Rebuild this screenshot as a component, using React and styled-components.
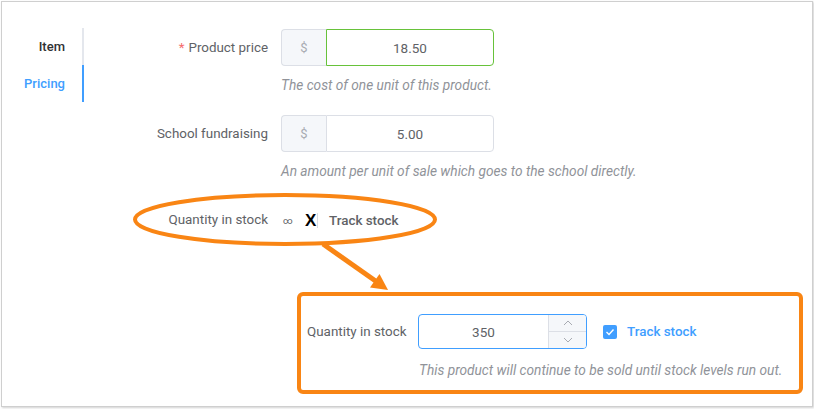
import React from "react";
import styled, { createGlobalStyle } from "styled-components";

const Global = createGlobalStyle`
  html, body { margin: 0; padding: 0; background: #fff; }
  body { font-family: Roboto, "Liberation Sans", Arial, sans-serif; -webkit-font-smoothing: antialiased; }
  * { box-sizing: border-box; }
`;

const Page = styled.div`
  position: relative;
  width: 814px;
  height: 409px;
  overflow: hidden;
`;

const Frame = styled.div`
  position: absolute;
  left: 1px;
  top: 1px;
  width: 812px;
  height: 406px;
  border: 1px solid #cfcfcf;
  box-shadow: 1px 1px 2px rgba(0, 0, 0, 0.18);
  display: flex;
  background: #fff;
`;

const Tabs = styled.div`
  width: 82px;
  padding-top: 26px;
  display: flex;
  flex-direction: column;
  flex-shrink: 0;
`;

const Tab = styled.div`
  height: 37px;
  line-height: 37px;
  text-align: right;
  padding-right: 17px;
  font-size: 13px;
  font-weight: 500;
  color: ${(p) => (p.$active ? "#409eff" : "#303133")};
  border-right: 2px solid ${(p) => (p.$active ? "#409eff" : "#e4e7ed")};
`;

const Form = styled.div`
  flex: 1;
  padding-top: 27px;
  display: flex;
  flex-direction: column;
`;

const Item = styled.div`
  display: flex;
  align-items: flex-start;
  flex-shrink: 0;
  margin-bottom: ${(p) => p.$mb || 0}px;
`;

const Label = styled.div`
  width: 197px;
  padding-right: 13px;
  text-align: right;
  font-size: 13.4px;
  color: #606266;
  line-height: ${(p) => p.$lh || 37}px;
  white-space: nowrap;
`;

const Star = styled.span`
  color: #f56c6c;
  margin-right: 4px;
`;

const Content = styled.div`
  display: flex;
  flex-direction: column;
`;

const Group = styled.div`
  display: flex;
  width: 213px;
  height: 37px;
`;

const Addon = styled.div`
  width: 45px;
  background: #f5f7fa;
  border: 1px solid #dcdfe6;
  border-right: none;
  border-radius: 4px 0 0 4px;
  color: #a8abb2;
  font-size: 13px;
  display: flex;
  align-items: center;
  justify-content: center;
`;

const Field = styled.div`
  flex: 1;
  border: 1px solid ${(p) => (p.$ok ? "#67c23a" : "#dcdfe6")};
  border-radius: 0 4px 4px 0;
  font-size: 13.5px;
  color: #606266;
  display: flex;
  align-items: center;
  justify-content: center;
`;

const Help = styled.div`
  margin-top: ${(p) => p.$mt || 10}px;
  font-size: 13.7px;
  line-height: 18px;
  font-style: italic;
  color: #909399;
  white-space: nowrap;
  margin-left: ${(p) => p.$ml || 0}px;
`;

const StockRow = styled.div`
  display: flex;
  align-items: center;
  flex-shrink: 0;
  height: 20px;
  margin-bottom: 62px;
`;

const Inline = styled.div`
  display: flex;
  align-items: center;
  font-size: 13px;
  color: #606266;
`;

const Infinity = styled.span`
  font-size: 9.5px;
  margin-left: 2px;
  width: 22px;
  color: #606266;
`;

const BrokenCheck = styled.span`
  position: relative;
  width: 13px;
  height: 15px;
  border-right: 1px solid #d8dbe2;
  margin-right: 11px;
  display: flex;
  align-items: center;
  justify-content: flex-start;
  color: #000;
  font-weight: 700;
  font-size: 17px;
  line-height: 15px;
  font-family: "Liberation Sans", Arial, sans-serif;
`;

const TrackText = styled.span`
  font-weight: 500;
  font-size: 13.4px;
  color: ${(p) => (p.$blue ? "#409eff" : "#606266")};
`;

const Box = styled.div`
  margin-left: 213px;
  width: 506px;
  height: 102px;
  flex-shrink: 0;
  border: 4px solid #f98514;
  border-radius: 6px;
  padding: 18px 0 0 6px;
`;

const BoxRow = styled.div`
  display: flex;
  align-items: center;
`;

const BoxLabel = styled.div`
  width: 111px;
  font-size: 13.4px;
  color: #606266;
`;

const Number = styled.div`
  width: 169px;
  height: 35px;
  border: 1px solid #409eff;
  border-radius: 4px;
  display: flex;
  overflow: hidden;
`;

const NumValue = styled.div`
  flex: 1;
  display: flex;
  align-items: center;
  justify-content: center;
  font-size: 13.5px;
  color: #606266;
`;

const Spinner = styled.div`
  width: 38px;
  background: #f5f7fa;
  border-left: 1px solid #dcdfe6;
  display: flex;
  flex-direction: column;
`;

const SpinBtn = styled.div`
  flex: 1;
  display: flex;
  align-items: center;
  justify-content: center;
  border-top: ${(p) => (p.$bottom ? "1px solid #dcdfe6" : "none")};
`;

const Check = styled.span`
  width: 14px;
  height: 14px;
  border-radius: 2px;
  background: #409eff;
  margin-left: 16px;
  margin-right: 10px;
  display: flex;
  align-items: center;
  justify-content: center;
`;

const Overlay = styled.svg`
  position: absolute;
  left: 0;
  top: 0;
  pointer-events: none;
`;

const Chevron = ({ up }) => (
  <svg width="10" height="6" viewBox="0 0 10 6">
    <path
      d={up ? "M1 5 L5 1 L9 5" : "M1 1 L5 5 L9 1"}
      fill="none"
      stroke="#a8abb2"
      strokeWidth="1"
    />
  </svg>
);

export default function App() {
  return (
    <Page>
      <Global />
      <Frame>
        <Tabs>
          <Tab>Item</Tab>
          <Tab $active>Pricing</Tab>
        </Tabs>
        <Form>
          <Item $mb={21}>
            <Label>
              <Star>*</Star>Product price
            </Label>
            <Content>
              <Group>
                <Addon>$</Addon>
                <Field $ok>18.50</Field>
              </Group>
              <Help>The cost of one unit of this product.</Help>
            </Content>
          </Item>
          <Item $mb={30}>
            <Label>School fundraising</Label>
            <Content>
              <Group>
                <Addon>$</Addon>
                <Field>5.00</Field>
              </Group>
              <Help>An amount per unit of sale which goes to the school directly.</Help>
            </Content>
          </Item>
          <StockRow>
            <Label $lh={20}>Quantity in stock</Label>
            <Inline>
              <Infinity>∞</Infinity>
              <BrokenCheck>X</BrokenCheck>
              <TrackText>Track stock</TrackText>
            </Inline>
          </StockRow>
          <Box>
            <BoxRow>
              <BoxLabel>Quantity in stock</BoxLabel>
              <Number>
                <NumValue>350</NumValue>
                <Spinner>
                  <SpinBtn>
                    <Chevron up />
                  </SpinBtn>
                  <SpinBtn $bottom>
                    <Chevron />
                  </SpinBtn>
                </Spinner>
              </Number>
              <Check>
                <svg width="10" height="8" viewBox="0 0 10 8">
                  <path d="M1.5 4 L4 6.5 L8.5 1.5" fill="none" stroke="#fff" strokeWidth="1.4" />
                </svg>
              </Check>
              <TrackText $blue>Track stock</TrackText>
            </BoxRow>
            <Help $ml={112} $mt={12}>This product will continue to be sold until stock levels run out.</Help>
          </Box>
        </Form>
      </Frame>
      <Overlay width="814" height="409" viewBox="0 0 814 409">
        <ellipse cx="285" cy="219.5" rx="150" ry="24.5" fill="none" stroke="#f98514" strokeWidth="4" />
        <line x1="323" y1="244" x2="377" y2="282" stroke="#f98514" strokeWidth="5" />
        <polygon points="388,290 370,287.5 379.5,274" fill="#f98514" />
      </Overlay>
    </Page>
  );
}
